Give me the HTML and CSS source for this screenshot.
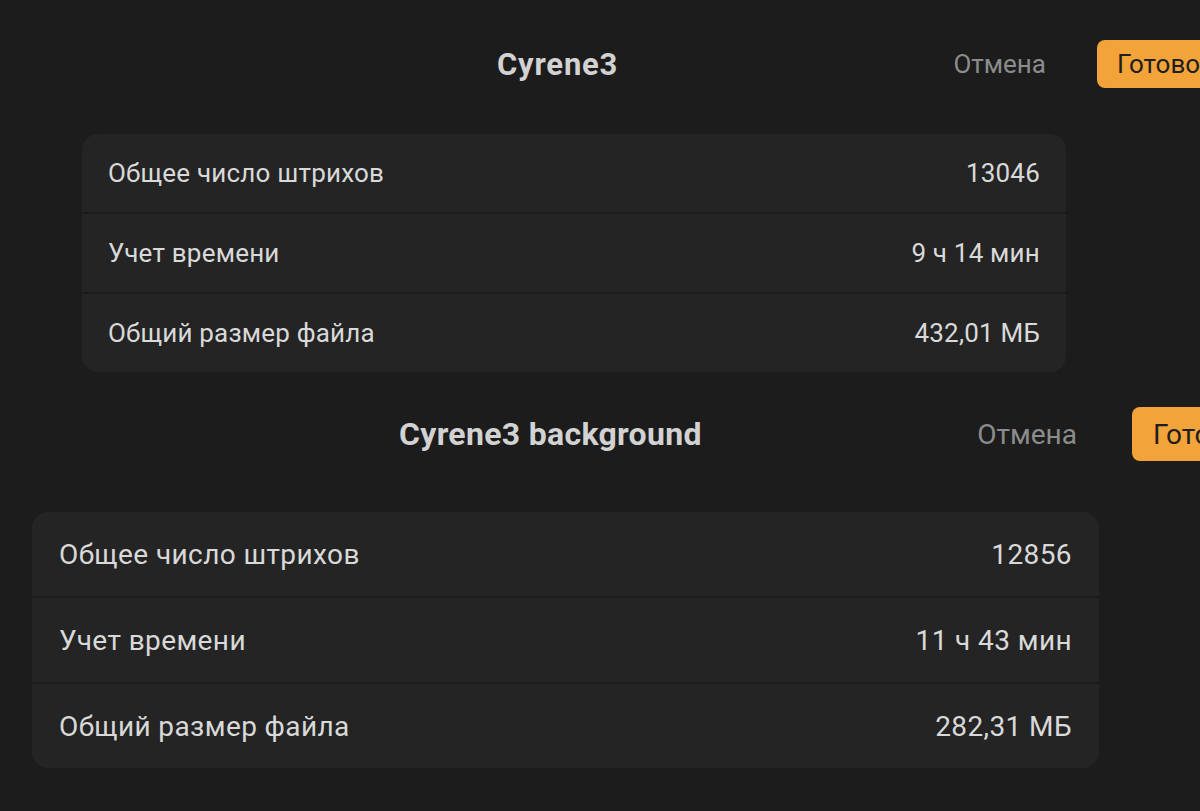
FILE: index.html
```html
<!DOCTYPE html>
<html lang="ru">
<head>
    <meta charset="UTF-8">
    <meta name="viewport" content="width=device-width, initial-scale=1.0">
    <title>Статистика холста</title>
    <link rel="stylesheet" href="styles.css">
</head>
<body>

<!-- First canvas -->
<section class="sheet sheet-top">
    <div class="head">
        <h1 class="title">Cyrene3</h1>
        <button class="cancel-btn">Отмена</button>
        <button class="done-btn">Готово</button>
    </div>
    <div class="card">
        <div class="row"><span>Общее число штрихов</span><span>13046</span></div>
        <div class="row"><span>Учет времени</span><span>9 ч 14 мин</span></div>
        <div class="row"><span>Общий размер файла</span><span>432,01 МБ</span></div>
    </div>
</section>

<!-- Second canvas -->
<section class="sheet sheet-bottom">
    <div class="head">
        <h1 class="title">Cyrene3 background</h1>
        <button class="cancel-btn">Отмена</button>
        <button class="done-btn">Готово</button>
    </div>
    <div class="card">
        <div class="row"><span>Общее число штрихов</span><span>12856</span></div>
        <div class="row"><span>Учет времени</span><span>11 ч 43 мин</span></div>
        <div class="row"><span>Общий размер файла</span><span>282,31 МБ</span></div>
    </div>
</section>

</body>
</html>
```

FILE: styles.css
```css
body {
    font-family: 'Roboto', 'Inter', sans-serif;
    background-color: #1c1c1c;
    color: #d9d9d9;
    margin: 0;
    padding: 0;
    width: 1200px;
    height: 811px;
    overflow: hidden;
}

.sheet {
    display: flex;
    flex-direction: column;
    width: 1280px;
}

.head {
    display: flex;
    align-items: center;
}

.title {
    margin: 0;
    font-weight: 700;
    color: #d2d2d2;
}

button {
    font-family: inherit;
    border: none;
    cursor: pointer;
}

.cancel-btn {
    background: none;
    color: #8c8c8c;
    padding: 0;
    margin-left: auto;
}

.done-btn {
    background-color: #f2a33a;
    color: #1e1e1e;
    border-radius: 8px;
    text-align: left;
}

.card {
    background-color: #242424;
    border-radius: 16px;
    overflow: hidden;
}

.row {
    display: flex;
    justify-content: space-between;
    align-items: center;
    border-top: 2px solid #1b1b1b;
}

.row:first-child {
    border-top: none;
}

/* Top sheet: smaller scale */
.sheet-top {
    padding-top: 40px;
}

.sheet-top .head {
    height: 48px;
}

.sheet-top .title {
    font-size: 31px;
    letter-spacing: 0.8px;
    margin-left: 497px;
}

.sheet-top .cancel-btn {
    font-size: 26px;
}

.sheet-top .done-btn {
    width: 120px;
    height: 48px;
    font-size: 26px;
    padding: 0 0 0 20px;
    margin-left: 51px;
    margin-right: 63px;
}

.sheet-top .card {
    margin: 46px 0 0 82px;
    width: 984px;
}

.sheet-top .row {
    height: 78px;
    padding: 0 26px;
    font-size: 26px;
    letter-spacing: 0.2px;
}

/* Bottom sheet: slightly larger scale */
.sheet-bottom {
    padding-top: 35px;
}

.sheet-bottom .head {
    height: 54px;
}

.sheet-bottom .title {
    font-size: 32px;
    letter-spacing: 0.3px;
    margin-left: 399px;
}

.sheet-bottom .cancel-btn {
    font-size: 28px;
}

.sheet-bottom .done-btn {
    width: 130px;
    height: 54px;
    font-size: 28px;
    padding: 0 0 0 21px;
    margin-left: 55px;
    margin-right: 18px;
}

.sheet-bottom .card {
    margin: 51px 0 0 32px;
    width: 1067px;
}

.sheet-bottom .row {
    height: 84px;
    padding: 0 27px;
    font-size: 28px;
    letter-spacing: 0.4px;
}
```
